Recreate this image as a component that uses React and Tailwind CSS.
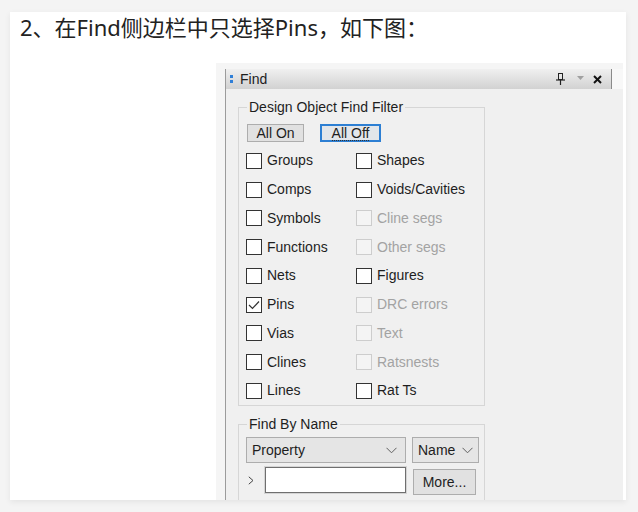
import React from "react";

const leftItems = [
  { label: "Groups" },
  { label: "Comps" },
  { label: "Symbols" },
  { label: "Functions" },
  { label: "Nets" },
  { label: "Pins", checked: true },
  { label: "Vias" },
  { label: "Clines" },
  { label: "Lines" },
];

const rightItems = [
  { label: "Shapes" },
  { label: "Voids/Cavities" },
  { label: "Cline segs", disabled: true },
  { label: "Other segs", disabled: true },
  { label: "Figures" },
  { label: "DRC errors", disabled: true },
  { label: "Text", disabled: true },
  { label: "Ratsnests", disabled: true },
  { label: "Rat Ts" },
];

function Check({ label, checked, disabled }) {
  return (
    <div className="flex items-center gap-[5px]">
      <div
        className={
          disabled
            ? "w-[16px] h-[16px] border border-[#cdcdcd] bg-[#f4f4f4] shrink-0"
            : "w-[16px] h-[16px] border border-[#333333] bg-white shrink-0 flex items-center justify-center"
        }
      >
        {checked && (
          <svg width="12" height="10" viewBox="0 0 12 10">
            <polyline points="1,5 4.5,8.5 11,1.5" fill="none" stroke="#333" strokeWidth="1.2" />
          </svg>
        )}
      </div>
      <span className={disabled ? "text-[#a3a3a3] whitespace-nowrap" : "text-[#1e1e1e] whitespace-nowrap"}>
        {label}
      </span>
    </div>
  );
}

function Chevron() {
  return (
    <svg width="11" height="7" viewBox="0 0 11 7" className="shrink-0">
      <polyline points="0.5,0.8 5.5,5.8 10.5,0.8" fill="none" stroke="#606060" strokeWidth="1" />
    </svg>
  );
}

export default function App() {
  const rows = [];
  for (let i = 0; i < leftItems.length; i++) {
    rows.push(<Check key={"l" + i} {...leftItems[i]} />);
    rows.push(<Check key={"r" + i} {...rightItems[i]} />);
  }
  return (
    <div className="w-[638px] h-[512px] bg-[#f4f4f4] pt-[12px] pl-[10px] overflow-hidden">
      <div className="w-[616px] h-[488px] bg-white shadow-[0_2px_6px_rgba(0,0,0,0.07)] flex flex-col">
        <p className="pl-[10px] -mt-[1px] text-[22px] text-[#222222] font-['Noto_Sans','Noto_Sans_CJK_SC',sans-serif]">
          2、在Find侧边栏中只选择Pins，如下图：
        </p>
        <div className="ml-[206px] mt-[19px] w-[407px] h-[437px] shrink-0 bg-[#f5f5f5] pt-[6px] pl-[9px] overflow-hidden font-['Liberation_Sans',Arial,sans-serif] text-[14px]">
          <div className="h-full border-l border-[#9c9c9c] bg-[#f0f0f0] flex flex-col">
            <div className="flex h-[20px] shrink-0">
              <div className="flex-1 flex items-center bg-linear-to-b from-[#f0f0f0] to-[#d2d2d2] border-r border-[#8a8a8a] pl-[4px] pr-[9px]">
                <div className="flex flex-col gap-[2px]">
                  <div className="w-[3px] h-[3px] bg-[#2f7fd8]" />
                  <div className="w-[3px] h-[3px] bg-[#2f7fd8]" />
                </div>
                <span className="ml-[7px] text-[#1e1e1e] leading-[16px]">Find</span>
                <div className="flex-1" />
                <svg width="9" height="12" viewBox="0 0 9 12" className="mr-[12px]">
                  <rect x="2.5" y="0.5" width="4" height="6" fill="none" stroke="#222" strokeWidth="1" />
                  <line x1="0" y1="7" x2="9" y2="7" stroke="#222" strokeWidth="1.2" />
                  <line x1="4.5" y1="7" x2="4.5" y2="12" stroke="#222" strokeWidth="1.2" />
                </svg>
                <svg width="7" height="4" viewBox="0 0 7 4" className="mr-[9px] -mt-[2px]">
                  <polygon points="0,0 7,0 3.5,4" fill="#a0a0a0" />
                </svg>
                <svg width="9" height="9" viewBox="0 0 9 9">
                  <line x1="1" y1="1" x2="8" y2="8" stroke="#111" strokeWidth="2" />
                  <line x1="8" y1="1" x2="1" y2="8" stroke="#111" strokeWidth="2" />
                </svg>
              </div>
              <div className="w-[11px] bg-[#f8f8f8]" />
            </div>

            <div className="pl-[12px] flex flex-col">
              <fieldset className="mt-[9px] w-[247px] border border-[#d6d6d6] pl-[8px] pt-[8px] pb-0">
                <legend className="px-[2px] leading-[18px] text-[#1e1e1e]">Design Object Find Filter</legend>
                <div className="flex gap-[16px]">
                  <div className="w-[57px] h-[18px] border border-[#adadad] bg-[#e1e1e1] flex items-center justify-center leading-[16px] text-[#1e1e1e]">
                    All On
                  </div>
                  <div className="w-[61px] h-[18px] border-2 border-[#2d7fd3] bg-[#e3e6ea] flex items-center justify-center leading-[14px] text-[#1e1e1e]">
                    <span className="border-b border-dotted border-[#333]">All Off</span>
                  </div>
                </div>
                <div className="-ml-[1px] mt-[4.5px] grid grid-cols-[110px_1fr] auto-rows-[28.75px] items-center">
                  {rows}
                </div>
              </fieldset>

              <fieldset className="mt-[9px] w-[247px] h-[120px] border border-[#d6d6d6] pl-[7px] pt-[4px] shrink-0">
                <legend className="ml-[1px] px-[2px] leading-[18px] text-[#1e1e1e]">Find By Name</legend>
                <div className="flex gap-[6px]">
                  <div className="w-[160px] h-[26px] border border-[#adadad] bg-[#e5e5e5] flex items-center pl-[5px] pr-[8px] text-[#1e1e1e]">
                    <span className="flex-1">Property</span>
                    <Chevron />
                  </div>
                  <div className="w-[67px] h-[26px] border border-[#adadad] bg-[#e5e5e5] flex items-center pl-[5px] pr-[5px] text-[#1e1e1e]">
                    <span className="flex-1">Name</span>
                    <Chevron />
                  </div>
                </div>
                <div className="flex mt-[4px] items-start">
                  <div className="w-[19px] h-[26px] flex items-center pl-[2px]">
                    <svg width="6" height="9" viewBox="0 0 6 9">
                      <polyline points="0.8,0.8 5,4.5 0.8,8.2" fill="none" stroke="#444" strokeWidth="1" />
                    </svg>
                  </div>
                  <div className="w-[141px] h-[26px] border border-[#6f6f6f] bg-white shadow-[0_0_0_1px_#d4d4d4]" />
                  <div className="ml-[7px] mt-[2px] w-[63px] h-[26px] border border-[#adadad] bg-[#e1e1e1] flex items-center justify-center text-[#1e1e1e]">
                    More...
                  </div>
                </div>
              </fieldset>
            </div>
          </div>
        </div>
      </div>
    </div>
  );
}
